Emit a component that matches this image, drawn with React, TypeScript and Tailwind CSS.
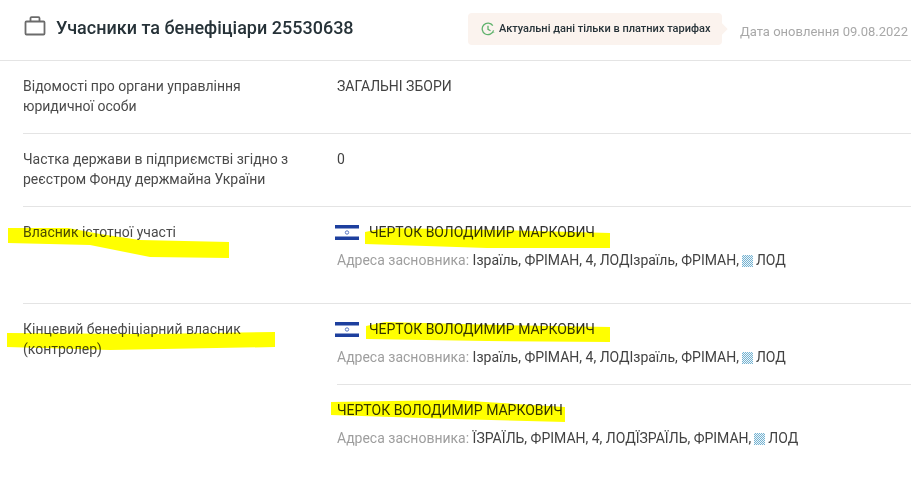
const font = "font-['Roboto',sans-serif]";

function Flag() {
  return (
    <svg width="24" height="15" viewBox="0 0 24 15" className="shrink-0">
      <rect width="24" height="15" fill="#ffffff" />
      <rect width="24" height="3.5" fill="#1d3f9e" />
      <rect y="11.5" width="24" height="3.5" fill="#1d3f9e" />
      <circle cx="12" cy="7.5" r="1.7" fill="none" stroke="#5a78c4" strokeWidth="1" />
    </svg>
  );
}

function Address({ first, second }: { first: string; second: string }) {
  return (
    <div className="mt-2 h-5 text-sm leading-5 text-[#424242] whitespace-nowrap">
      <span className="text-[#9e9e9e]">Адреса засновника: </span>
      {first}
      <span className="inline-block align-[-2px] mx-[3px] w-[11px] h-3 bg-[repeating-conic-gradient(#74b2d2_0_25%,#eef6f9_0_50%)] bg-[length:2px_2px]" />
      {second}
    </div>
  );
}

function Name({ flag }: { flag?: boolean }) {
  return (
    <div className="flex items-center h-5 text-sm leading-5 text-[#333333] whitespace-nowrap">
      {flag && (
        <span className="-ml-0.5 mr-2.5 flex">
          <Flag />
        </span>
      )}
      ЧЕРТОК ВОЛОДИМИР МАРКОВИЧ
    </div>
  );
}

function Row({ label, children, last }: { label: React.ReactNode; children: React.ReactNode; last?: boolean }) {
  return (
    <div className={`flex pt-[15px] ${last ? "" : "border-b border-[#e4e4e4]"}`}>
      <div className="w-[314px] shrink-0 text-sm leading-5 text-[#4a4a4a]">{label}</div>
      <div className="flex-1 min-w-0 text-sm leading-5 text-[#424242]">{children}</div>
    </div>
  );
}

export default function App() {
  return (
    <div className={`${font} relative w-[911px] h-[484px] overflow-hidden bg-white`}>
      <header className="flex items-center h-[61px] border-b border-[#e4e4e4] pl-6 pr-[3px]">
        <svg width="22" height="20" viewBox="0 0 22 20" fill="none" stroke="#6b6b6b" strokeWidth="1.8" className="shrink-0 -mt-2">
          <rect x="1.5" y="5.5" width="19" height="13" rx="1" />
          <path d="M6.5 5.5V2.2C6.5 1.6 7 1.2 7.5 1.2H14.500C15 1.200 15.500 1.600 15.500 2.200V5.500" />
        </svg>
        <h1 className="ml-2.5 text-lg leading-6 font-medium text-[#263238] whitespace-nowrap -mt-1">
          Учасники та бенефіціари 25530638
        </h1>
        <div className="relative ml-auto flex items-center h-8 w-[254px] rounded bg-[#fbf3ee] pl-[13px] -mt-[2px] text-[11px] text-[#263238] font-medium whitespace-nowrap">
          <svg width="14" height="14" viewBox="0 0 14 14" fill="none" stroke="#5fb26c" strokeWidth="1.300" className="shrink-0 mr-1">
            <path d="M12.600 8.400A5.800 5.800 0 1 1 11.800 3.600" />
            <path d="M7 3.800V7.300L9.500 8.800" />
            <path d="M12.700 10.500V11" />
          </svg>
          Актуальні дані тільки в платних тарифах
          <span className="absolute -right-1 top-3 w-2 h-2 rotate-45 bg-[#fbf3ee]" />
        </div>
        <span className="ml-[18px] mt-[3px] text-[13px] text-[#a8a8a8] whitespace-nowrap">Дата оновлення 09.08.2022</span>
      </header>

      <main className="pl-[23px]">
        <Row label={<>Відомості про органи управління<br />юридичної особи</>}>
          <div className="h-[57px]">ЗАГАЛЬНІ ЗБОРИ</div>
        </Row>
        <Row label={<>Частка держави в підприємстві згідно з<br />реєстром Фонду держмайна України</>}>
          <div className="h-[57px]">0</div>
        </Row>
        <Row label="Власник істотної участі">
          <div className="pb-[33px]">
            <Name flag />
            <Address first="Ізраїль, ФРІМАН, 4, ЛОДІзраїль, ФРІМАН," second="ЛОД" />
          </div>
        </Row>
        <Row last label={<>Кінцевий бенефіціарний власник<br />(контролер)</>}>
          <div className="pb-[17px] border-b border-[#e4e4e4]">
            <Name flag />
            <Address first="Ізраїль, ФРІМАН, 4, ЛОДІзраїль, ФРІМАН," second="ЛОД" />
          </div>
          <div className="pt-[15px]">
            <Name />
            <Address first="ЇЗРАЇЛЬ, ФРІМАН, 4, ЛОДЇЗРАЇЛЬ, ФРІМАН," second="ЛОД" />
          </div>
        </Row>
      </main>

      {/* marker strokes drawn over the page */}
      <svg width="911" height="484" className="absolute left-0 top-0 pointer-events-none mix-blend-multiply">
        <g fill="#ffff00">
          <path d="M8 228L68 228L100 234L140 240L229 242L229 258L150 257L90 245L8 243Z" />
          <path d="M7 333L150 334L275 332L275 347L110 350L7 347Z" />
          <path d="M365 232L385 228L500 230L610 233L610 248L487 248L365 244Z" />
          <path d="M366 326L385 322L500 325L610 327L610 342L487 341L366 339Z" />
          <path d="M331 402L453 400L565 407L565 422L453 419L331 415Z" />
        </g>
      </svg>
    </div>
  );
}
